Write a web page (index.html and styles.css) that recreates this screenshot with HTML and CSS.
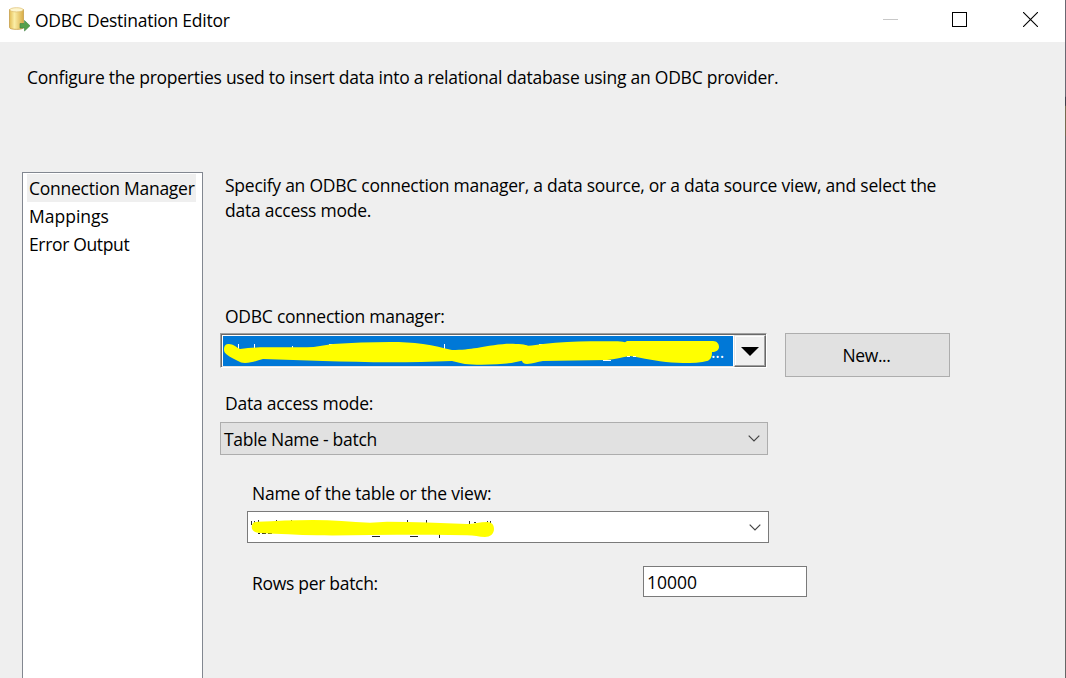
FILE: index.html
```
<!DOCTYPE html>
<html lang="en">
<head>
  <meta charset="UTF-8">
  <title>ODBC Destination Editor</title>
  <link rel="stylesheet" href="styles.css">
</head>
<body>
  <div class="dialog">
    <header class="titlebar">
      <svg class="app-icon" width="22" height="25" viewBox="0 0 22 25">
        <defs>
          <linearGradient id="gold" x1="0" x2="1">
            <stop offset="0" stop-color="#e3bd55"/>
            <stop offset=".35" stop-color="#fbeea6"/>
            <stop offset="1" stop-color="#d9ac45"/>
          </linearGradient>
        </defs>
        <path d="M.5 2.500v18c0 2.500 14 2.500 14 0v-18z" fill="url(#gold)" stroke="#c79f4c" stroke-width=".8"/>
        <ellipse cx="7.500" cy="2.800" rx="6.800" ry="2.100" fill="#fdf6cf" stroke="#dcbc6c" stroke-width=".7"/>
        <path d="M11 16.500h4.500v-3l5.500 5.300-5.500 5.200V21H11z" fill="#55a04c" stroke="#3f7f42" stroke-width=".6"/>
      </svg>
      <h1>ODBC Destination Editor</h1>
      <div class="window-buttons">
        <svg class="minimize" width="15" height="15" viewBox="0 0 15 15"><path d="M0 7.500h15" stroke="#c8c8c8"/></svg>
        <svg width="15" height="15" viewBox="0 0 15 15"><rect x=".5" y=".5" width="14" height="14" fill="none" stroke="#000"/></svg>
        <svg width="15" height="15" viewBox="0 0 15 15"><path d="M0 0l15 15M15 0L0 15" stroke="#000" stroke-width="1.100"/></svg>
      </div>
    </header>

    <p class="intro">Configure the properties used to insert data into a relational database using an ODBC provider.</p>

    <div class="content">
      <ul class="pages">
        <li class="selected">Connection Manager</li>
        <li class="mappings">Mappings</li>
        <li class="error-output">Error Output</li>
      </ul>

      <main class="settings">
        <p class="hint">Specify an ODBC connection manager, a data source, or a data source view, and select the<br>data access mode.</p>

        <label class="label-manager">ODBC connection manager:</label>
        <div class="manager-row">
          <div class="combo-classic">
            <div class="combo-value">
              <svg width="510" height="30" viewBox="0 0 510 30">
                <path d="M15.500 8v6M31.500 8v6M69.500 10v4M106 8.500h4M111 8.500h3M221.500 8v6M316 8.500h4" stroke="#fff"/>
                <path d="M1 14C1 9 3 8 6 8c4 0 7 3 11 5 7-1 12-1 20-1.700h47c9 0 17-2.300 26-3.300 18-1.300 38-2 57-2 12 0 22 .6 33 2 11 1.500 20 4 29 6 10 0 17-1 25-2 10-2 24-4.300 33-4.300 8 0 16 .7 18 2 5 0 10-1 15-1.700 17-1.600 32-2.700 47-2.700h25c4 0 7 .4 10 1l2-1.300h86c4 0 6 3 6 6 0 3-3 5-7 5 0 5-1 7-4 8.700-7 2-16 2.300-25 2.300-8 0-15-.7-23-1.700-10-1.400-20-3.600-30-5.300-8 1.500-15 3-23 4L320 25c-6 .5-10 3-16 3-3 0-5-1.500-5-3.300-9 2-16 3.300-25 3.600-12 .6-25 .5-32-.3-5-.7-9-2.200-13-3-21 .8-41 1.300-62 1.300-22 0-45-.7-67-1.300-20-.5-40-1.500-60-2-6 1.500-11 4-18 4-3 0-5-1-7-2-4-2-8-4-11-6.300-2-1.500-3-2.700-3-4.700z" fill="#ff0"/>
                <path d="M380 24.500h8M404 20.500h3M410 20.500h3" stroke="#fff"/>
              </svg>
              <span>...</span>
            </div>
            <div class="combo-button">
              <svg width="18" height="9" viewBox="0 0 18 9"><path d="M0 0h18L9 9z"/></svg>
            </div>
          </div>
          <button class="new-button">New...</button>
        </div>

        <label class="label-mode">Data access mode:</label>
        <div class="combo combo-mode">
          <span>Table Name - batch</span>
          <svg width="12" height="7" viewBox="0 0 12 7"><path d="M.7.7L6 6 11.300.7" fill="none" stroke="#444" stroke-width="1.200"/></svg>
        </div>

        <div class="table-options">
          <label class="label-table">Name of the table or the view:</label>
          <div class="combo combo-table">
            <svg width="248" height="30" viewBox="0 0 248 30">
              <path d="M3.500 9v4M6.500 9v3M10.500 8v3M28.500 8v3M43.500 8v3M89 9.500h4M159.500 8v4M178.500 8v4M221.500 9v3M226 10.500h2M239.500 9v3M242.500 9v3" stroke="#333"/>
              <path d="M10 21.500h2M14 21.500h4M20 21.500h4M124 24.500h8M162 24.500h8M191.500 22v4" stroke="#222"/>
              <path d="M3.700 15c0-3.500 2-5.300 6.300-5.300C27 9 46 8 65 8c19 0 38 1.800 57 2.700l17-1c27 0 53 1.300 80 2.300 7 0 13-2 20-2 5 0 7 3 7 7 0 5-4 8-9 8-6 0-11-1.700-18-1.700-23-.5-47-.6-70-.6l-27 .3c-18 .3-36 .6-53 .3-20-.3-37-1.500-57-2.300-5 0-8.300-2.500-8.300-6z" fill="#ff0"/>
            </svg>
            <svg width="12" height="7" viewBox="0 0 12 7"><path d="M.7.7L6 6 11.300.7" fill="none" stroke="#444" stroke-width="1.200"/></svg>
          </div>
          <div class="batch-row">
            <label class="label-rows">Rows per batch:</label>
            <input type="text" value="10000">
          </div>
        </div>
      </main>
    </div>
  </div>
</body>
</html>
```
FILE: styles.css
```
* {
  box-sizing: border-box;
  margin: 0;
  padding: 0;
}

body {
  font-family: "Open Sans", sans-serif;
  font-size: 17.5px;
  line-height: 25px;
  letter-spacing: -0.25px;
  height: 678px;
  overflow: hidden;
  color: #000;
}

.dialog {
  height: 678px;
  overflow: hidden;
  background: #efefef;
  border-right: 1px solid;
  border-image: linear-gradient(#6b6872 97px, #3e3d49 98px, #3e3d49 106px, #756a50 107px, #756a50 136px, #666 137px) 1;
}

.titlebar {
  height: 42px;
  display: flex;
  align-items: center;
  padding: 0 27px 3px 9px;
  background: #fff;
}

.app-icon {
  margin-top: -1px;
}

h1 {
  font-size: 17.5px;
  font-weight: normal;
  margin: 2px 0 0 4px;
}

.window-buttons {
  display: flex;
  gap: 56px;
  margin-left: auto;
}

.minimize {
  margin-right: -2px;
}

.intro {
  margin: 23px 0 0 27px;
  height: 25px;
  white-space: nowrap;
}

.content {
  display: flex;
  margin-top: 82px;
  padding-left: 22px;
}

.pages {
  width: 181px;
  height: 520px;
  list-style: none;
  padding: 1px 6px 0 4px;
  background: #fff;
  border: 1px solid #828790;
}

.pages li {
  height: 28px;
  line-height: 29px;
  padding-left: 2px;
  white-space: nowrap;
}

.pages .selected {
  background: #efefef;
}

.pages .mappings {
  letter-spacing: 0;
}

.pages .error-output {
  letter-spacing: -0.35px;
}

.settings {
  flex: 1;
  padding-left: 17px;
}

label {
  display: block;
  white-space: nowrap;
}

.hint {
  margin: 1px 0 0 5px;
  white-space: nowrap;
}

.label-manager {
  margin: 81px 0 0 5px;
}

.manager-row {
  display: flex;
  align-items: flex-start;
  gap: 18px;
  margin-top: 4px;
}

.combo-classic {
  width: 547px;
  height: 35px;
  display: flex;
  background: #fff;
  border: 1px solid;
  border-color: #a0a0a0 #fff #fff #a0a0a0;
  box-shadow: inset 1px 1px #696969, inset -1px -1px #e3e3e3;
}

.combo-value {
  width: 510px;
  height: 30px;
  margin: 2px 1px 0 2px;
  display: flex;
  background: #0078d7;
  color: #fff;
}

.combo-value svg {
  flex: none;
}

.combo-value span {
  margin: 3px 0 0 -22px;
}

.combo-button {
  width: 32px;
  height: 32px;
  margin-top: 1px;
  padding-right: 1px;
  display: flex;
  align-items: center;
  justify-content: center;
  background: #f0f0f0;
  border: 1px solid;
  border-color: #e3e3e3 #696969 #696969 #e3e3e3;
  box-shadow: inset -1px -1px #a0a0a0, inset 1px 1px #fff;
}

.new-button {
  width: 165px;
  height: 44px;
  padding-right: 2px;
  font: inherit;
  letter-spacing: -0.4px;
  color: #000;
  background: #e1e1e1;
  border: 1px solid #adadad;
}

.label-mode {
  margin: 14px 0 0 5px;
}

.combo {
  display: flex;
  align-items: center;
  justify-content: space-between;
  padding-right: 7px;
}

.combo-mode {
  width: 548px;
  height: 33px;
  margin-top: 6px;
  padding-left: 3px;
  background: #e1e1e1;
  border: 1px solid #adadad;
}

.combo-mode span {
  margin-top: 2px;
  letter-spacing: -0.3px;
}

.table-options {
  padding-left: 27px;
}

.label-table {
  margin: 26px 0 0 5px;
  letter-spacing: -0.22px;
}

.combo-table {
  width: 522px;
  height: 32px;
  margin-top: 5px;
  background: #fff;
  border: 1px solid #7a7a7a;
}

.batch-row {
  width: 560px;
  display: flex;
  justify-content: space-between;
  margin-top: 23px;
}

.label-rows {
  margin: 5px 0 0 5px;
  letter-spacing: -0.3px;
}

input {
  width: 164px;
  height: 31px;
  padding: 0 3px;
  font: inherit;
  background: #fff;
  border: 1px solid #7a7a7a;
}
```
